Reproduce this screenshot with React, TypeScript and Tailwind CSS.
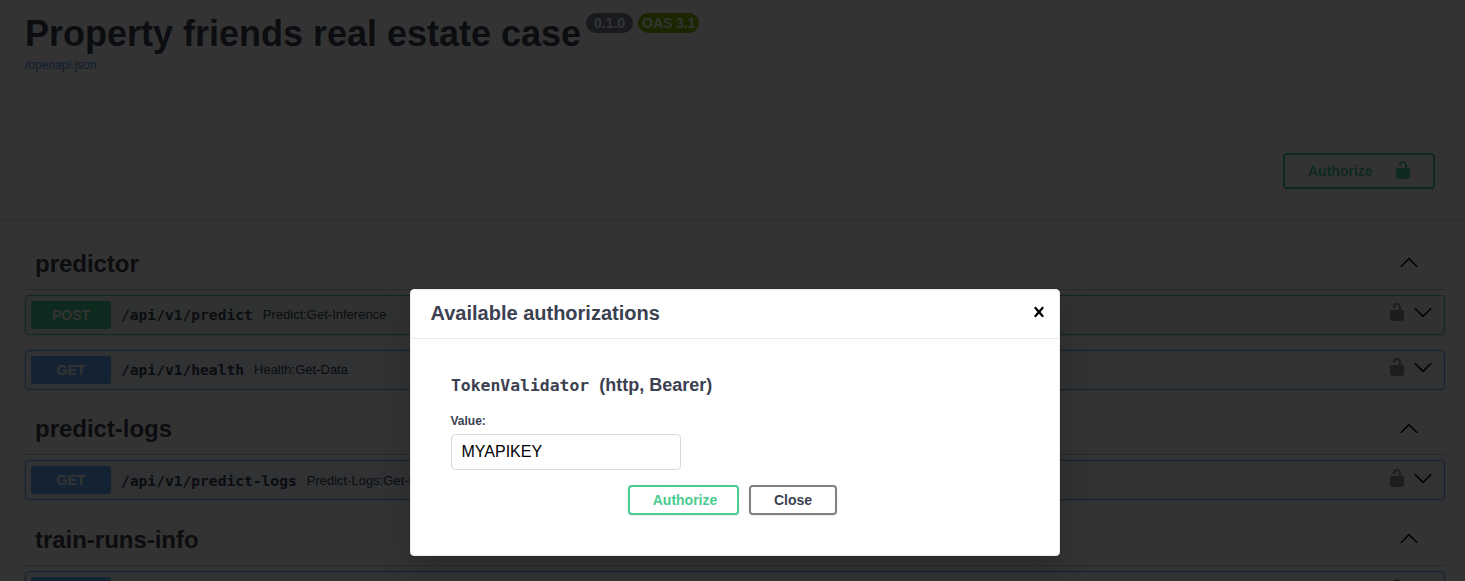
import React from "react";

type Method = "POST" | "GET";

interface Operation {
  method: Method;
  path: string;
  summary: string;
  shifted?: boolean;
}

interface Tag {
  name: string;
  headerClass: string;
  arrowClass: string;
  operations: Operation[];
}

const tags: Tag[] = [
  {
    name: "predictor",
    headerClass: "h-[50px]",
    arrowClass: "pt-3",
    operations: [
      { method: "POST", path: "/api/v1/predict", summary: "Predict:Get-Inference" },
      { method: "GET", path: "/api/v1/health", summary: "Health:Get-Data" },
    ],
  },
  {
    name: "predict-logs",
    headerClass: "h-[50px]",
    arrowClass: "pt-[13px]",
    operations: [
      { method: "GET", path: "/api/v1/predict-logs", summary: "Predict-Logs:Get-Logs", shifted: true },
    ],
  },
  {
    name: "train-runs-info",
    headerClass: "h-[51px] pt-px",
    arrowClass: "pt-3",
    operations: [
      { method: "GET", path: "/api/v1/train-runs-info", summary: "Train-Runs-Info:Get-Data" },
    ],
  },
];

const methodStyles: Record<Method, { row: string; badge: string }> = {
  POST: { row: "border-[#49cc90] bg-[#49cc90]/10", badge: "bg-[#49cc90]" },
  GET: { row: "border-[#61affe] bg-[#61affe]/10", badge: "bg-[#61affe]" },
};

function UnlockIcon({ className }: { className?: string }) {
  return (
    <svg viewBox="0 0 20 20" className={`size-5 shrink-0 fill-current ${className ?? ""}`}>
      <path d="M15.8 8H14V5.6C14 2.703 12.665 1 10 1 7.334 1 6 2.703 6 5.6V6h2v-.801C8 3.754 8.797 3 10 3c1.203 0 2 .754 2 2.199V8H4c-.553 0-1 .646-1 1.199V17c0 .549.428 1.139.951 1.307l1.197.387C5.672 18.861 6.55 19 7.1 19h5.8c.549 0 1.428-.139 1.951-.307l1.196-.387c.524-.167.953-.757.953-1.306V9.199C17 8.646 16.352 8 15.8 8z" />
    </svg>
  );
}

function ArrowUp() {
  return (
    <svg viewBox="0 0 20 20" className="size-5 shrink-0 fill-black">
      <path d="M17.418 14.908c.272.268.709.268.979 0s.271-.701 0-.969L10.489 6.1c-.27-.268-.707-.268-.979 0l-7.908 7.839c-.27.268-.27.701 0 .969.271.268.709.268.98 0L10 7.767l7.418 7.141z" />
    </svg>
  );
}

function ArrowDown() {
  return (
    <svg viewBox="0 0 20 20" className="size-5 shrink-0 fill-black">
      <path d="M17.418 6.109c.272-.268.709-.268.979 0s.271.701 0 .969l-7.908 7.83c-.27.268-.707.268-.979 0l-7.908-7.83c-.27-.268-.27-.701 0-.969.271-.268.709-.268.979 0L10 13.25l7.418-7.141z" />
    </svg>
  );
}

function CloseIcon() {
  return (
    <svg viewBox="0 0 20 20" className="size-5 fill-black">
      <path d="M14.348 14.849c-.469.469-1.229.469-1.697 0L10 11.819l-2.651 3.029c-.469.469-1.229.469-1.697 0-.469-.469-.469-1.229 0-1.697l2.758-3.15-2.759-3.152c-.469-.469-.469-1.228 0-1.697.469-.469 1.228-.469 1.697 0L10 8.183l2.651-3.031c.469-.469 1.228-.469 1.697 0 .469.469.469 1.229 0 1.697l-2.758 3.152 2.758 3.15c.469.469.469 1.229 0 1.698z" />
    </svg>
  );
}

function OperationRow({ method, path, summary, shifted }: Operation) {
  const styles = methodStyles[method];
  return (
    <div
      className={`mb-[15px] flex h-10 items-start rounded border p-[5px] shadow-[0_0_3px_rgba(0,0,0,0.19)] ${styles.row}`}
    >
      <span
        className={`flex h-7 w-20 shrink-0 items-center justify-center rounded-[3px] text-sm font-bold text-white ${styles.badge}`}
      >
        {method}
      </span>
      <div className={`flex min-w-0 flex-1 items-start gap-2.5 pl-2.5 ${shifted ? "pt-px" : ""}`}>
        <span className="font-['DejaVu_Sans_Mono',monospace] text-[14.6px] leading-7 font-bold whitespace-nowrap">
          {path}
        </span>
        <span className="text-[13px] leading-7 whitespace-nowrap">{summary}</span>
      </div>
      <div className={`flex gap-1.5 pr-1.5 ${shifted ? "pt-0.5" : "pt-px"}`}>
        <UnlockIcon className="text-black opacity-40" />
        <ArrowDown />
      </div>
    </div>
  );
}

function TagSection({ name, headerClass, arrowClass, operations }: Tag) {
  return (
    <section>
      <header
        className={`mb-[5px] flex items-start justify-between border-b border-[#3b4151]/30 pr-[26px] pl-2.5 ${headerClass}`}
      >
        <h3 className="pt-[9px] text-2xl leading-[30px] font-bold tracking-[-0.03px]">{name}</h3>
        <div className={arrowClass}>
          <ArrowUp />
        </div>
      </header>
      {operations.map((op) => (
        <OperationRow key={op.path} {...op} />
      ))}
    </section>
  );
}

function AuthDialog() {
  return (
    <div
      role="dialog"
      className="mt-[289px] ml-[410px] h-[267px] w-[650px] rounded border border-[#ebebeb] bg-white shadow-[0_10px_30px_rgba(0,0,0,0.2)]"
    >
      <div className="flex h-[49px] items-center justify-between border-b border-[#ebebeb] pr-2.5 pl-[19.5px]">
        <h3 className="pb-[3px] text-xl font-bold">Available authorizations</h3>
        <button aria-label="close" className="mb-1">
          <CloseIcon />
        </button>
      </div>
      <div className="px-10">
        <h4 className="flex items-baseline gap-2.5 pt-8 text-lg leading-7 font-bold">
          <code className="font-['DejaVu_Sans_Mono',monospace] text-[16.4px] font-bold">TokenValidator</code>
          <span>(http, Bearer)</span>
        </h4>
        <label className="mt-[13px] -ml-px block pl-[0.5px] text-xs leading-4 font-bold">Value:</label>
        <input
          readOnly
          value="MYAPIKEY"
          className="mt-[5px] block h-9 w-[230px] rounded border border-[#d9d9d9] bg-white px-[9.5px] text-base text-black"
        />
        <div className="mt-[15px] flex gap-2.5 pl-[177px]">
          <button className="h-[30px] w-[111px] rounded border-2 border-[#49cc90] pl-[3px] text-sm font-bold text-[#49cc90] shadow-[0_1px_2px_rgba(0,0,0,0.1)]">
            Authorize
          </button>
          <button className="h-[30px] w-[88px] rounded border-2 border-[#808080] text-sm font-bold shadow-[0_1px_2px_rgba(0,0,0,0.1)]">
            Close
          </button>
        </div>
      </div>
    </div>
  );
}

export default function App() {
  return (
    <div className="relative h-[581px] w-[1465px] overflow-hidden bg-white font-['Liberation_Sans',Arial,sans-serif] text-[#3b4151]">
      <div className="flex h-[123px] flex-col px-[25px] pt-[13px]">
        <div className="flex items-start gap-[5px]">
          <h2 className="text-4xl leading-[41px] font-bold tracking-[-0.01px] whitespace-nowrap">
            Property friends real estate case
          </h2>
          <span className="h-5 rounded-full bg-[#7d8492] px-2 text-sm leading-5 font-bold text-white">0.1.0</span>
          <span className="h-5 w-[61px] rounded-full bg-[#89bf04] pl-1 text-sm leading-5 font-bold tracking-[-0.1px] whitespace-nowrap text-white">
            OAS 3.1
          </span>
        </div>
        <a className="mt-[3px] text-xs leading-4 text-[#4990e2]">/openapi.json</a>
      </div>

      <div className="flex h-24 items-center justify-end bg-white pr-[30px] shadow-[0_1px_2px_rgba(0,0,0,0.15)]">
        <button className="flex h-9 w-[152px] items-center justify-between rounded border-2 border-[#49cc90] pr-5 pl-[23px] text-sm font-bold text-[#49cc90] shadow-[0_1px_2px_rgba(0,0,0,0.1)]">
          Authorize
          <UnlockIcon className="mb-0.5" />
        </button>
      </div>

      <main className="px-5 pt-[21px]">
        <div className="pl-[5px]">
          {tags.map((tag) => (
            <TagSection key={tag.name} {...tag} />
          ))}
        </div>
      </main>

      <div className="absolute inset-0 bg-black/80">
        <AuthDialog />
      </div>
    </div>
  );
}
